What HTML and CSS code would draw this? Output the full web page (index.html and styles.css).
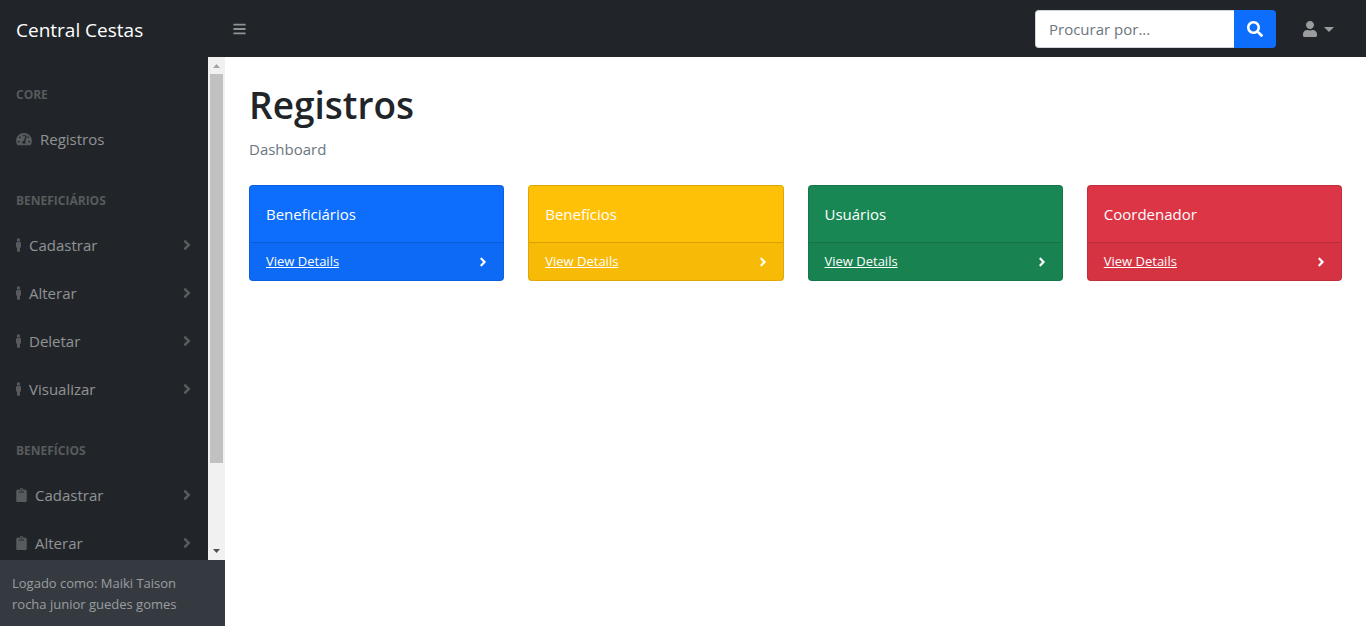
FILE: index.html
```
<!DOCTYPE html>
<html lang="pt-BR">
<head>
<meta charset="utf-8">
<meta name="viewport" content="width=device-width, initial-scale=1">
<title>Central Cestas</title>
<link rel="stylesheet" href="styles.css">
</head>
<body>
<svg class="sprite" aria-hidden="true">
  <symbol id="bars" viewBox="0 0 448 512"><path d="M16 132h416c8.837 0 16-7.163 16-16V76c0-8.837-7.163-16-16-16H16C7.163 60 0 67.163 0 76v40c0 8.837 7.163 16 16 16zm0 160h416c8.837 0 16-7.163 16-16v-40c0-8.837-7.163-16-16-16H16c-8.837 0-16 7.163-16 16v40c0 8.837 7.163 16 16 16zm0 160h416c8.837 0 16-7.163 16-16v-40c0-8.837-7.163-16-16-16H16c-8.837 0-16 7.163-16 16v40c0 8.837 7.163 16 16 16z"/></symbol>
  <symbol id="search" viewBox="0 0 512 512"><path d="M505 442.7L405.300 343c-4.500-4.500-10.600-7-17-7H372c27.600-35.300 44-79.700 44-128C416 93.100 322.900 0 208 0S0 93.100 0 208s93.100 208 208 208c48.300 0 92.700-16.400 128-44v16.300c0 6.400 2.500 12.500 7 17l99.700 99.700c9.400 9.400 24.600 9.400 33.900 0l28.300-28.300c9.400-9.400 9.400-24.600.1-34zM208 336c-70.700 0-128-57.200-128-128 0-70.700 57.200-128 128-128 70.700 0 128 57.200 128 128 0 70.700-57.200 128-128 128z"/></symbol>
  <symbol id="user" viewBox="0 0 448 512"><path d="M224 256c70.700 0 128-57.300 128-128S294.700 0 224 0 96 57.300 96 128s57.300 128 128 128zm89.600 32h-16.700c-22.200 10.200-46.900 16-72.900 16s-50.600-5.800-72.900-16h-16.700C60.200 288 0 348.200 0 422.400V464c0 26.500 21.500 48 48 48h352c26.500 0 48-21.500 48-48v-41.600c0-74.200-60.200-134.400-134.400-134.400z"/></symbol>
  <symbol id="male" viewBox="0 0 192 512"><path d="M96 0c35.346 0 64 28.654 64 64s-28.654 64-64 64-64-28.654-64-64S60.654 0 96 0m48 144h-11.360c-22.711 10.443-49.590 10.894-73.280 0H48c-26.510 0-48 21.490-48 48v136c0 13.255 10.745 24 24 24h16v136c0 13.255 10.745 24 24 24h64c13.255 0 24-10.745 24-24V352h16c13.255 0 24-10.745 24-24V192c0-26.510-21.490-48-48-48z"/></symbol>
  <symbol id="angle" viewBox="0 0 256 512"><path d="M224.300 273l-136 136c-9.400 9.400-24.600 9.400-33.900 0l-22.600-22.600c-9.400-9.400-9.400-24.600 0-33.900l96.400-96.400-96.400-96.400c-9.400-9.400-9.400-24.600 0-33.900L54.300 103c9.400-9.400 24.600-9.400 33.900 0l136 136c9.500 9.400 9.500 24.600.1 34z"/></symbol>
  <symbol id="clipboard" viewBox="0 0 384 512"><path d="M384 112v352c0 26.510-21.490 48-48 48H48c-26.510 0-48-21.490-48-48V112c0-26.510 21.490-48 48-48h80c0-35.290 28.710-64 64-64s64 28.710 64 64h80c26.510 0 48 21.490 48 48zM192 40c-13.255 0-24 10.745-24 24s10.745 24 24 24 24-10.745 24-24-10.745-24-24-24m96 114v-20a6 6 0 0 0-6-6H102a6 6 0 0 0-6 6v20a6 6 0 0 0 6 6h180a6 6 0 0 0 6-6z"/></symbol>
  <symbol id="gauge" viewBox="0 0 576 512"><path fill-rule="evenodd" d="M288 32C128.940 32 0 160.940 0 320c0 52.800 14.250 102.260 39.060 144.800 5.610 9.620 16.300 15.200 27.440 15.200h443c11.140 0 21.830-5.580 27.440-15.200C561.750 422.260 576 372.800 576 320c0-159.060-128.940-288-288-288zm0 64a32 32 0 1 1 0 64 32 32 0 0 1 0-64zM96 384a32 32 0 1 1 0-64 32 32 0 0 1 0 64zm48-160a32 32 0 1 1 0-64 32 32 0 0 1 0 64zm246.770-72.410l-61.330 184C343.130 347.330 352 364.540 352 384c0 11.720-3.380 22.550-8.880 32H232.880c-5.500-9.450-8.880-20.280-8.880-32 0-33.940 26.500-61.430 59.900-63.590l61.340-184.010c4.170-12.560 17.730-19.450 30.360-15.170 12.570 4.190 19.350 17.790 15.170 30.360zM432 160a32 32 0 1 1-23 54l16-49c2-3 4-5 7-5zM480 384a32 32 0 1 1 0-64 32 32 0 0 1 0 64z"/></symbol>
</svg>

<header class="topnav">
  <a class="brand" href="#">Central Cestas</a>
  <button class="menu-toggle" type="button" aria-label="Menu"><svg class="icon-bars"><use href="#bars"/></svg></button>
  <form class="search">
    <input class="search-input" type="text" placeholder="Procurar por..." aria-label="Procurar por...">
    <button class="search-button" type="button" aria-label="Procurar"><svg class="icon-search"><use href="#search"/></svg></button>
  </form>
  <button class="user-menu" type="button" aria-label="Usuário"><svg class="icon-user"><use href="#user"/></svg><span class="caret"></span></button>
</header>

<div class="layout">
  <aside class="sidebar">
    <div class="sidebar-scroll">
      <nav class="menu">
        <h2 class="menu-heading">CORE</h2>
        <a class="menu-link" href="#"><svg class="icon-gauge"><use href="#gauge"/></svg>Registros</a>
        <h2 class="menu-heading">BENEFICIÁRIOS</h2>
        <a class="menu-link" href="#"><svg class="icon-male"><use href="#male"/></svg>Cadastrar<svg class="icon-arrow"><use href="#angle"/></svg></a>
        <a class="menu-link" href="#"><svg class="icon-male"><use href="#male"/></svg>Alterar<svg class="icon-arrow"><use href="#angle"/></svg></a>
        <a class="menu-link" href="#"><svg class="icon-male"><use href="#male"/></svg>Deletar<svg class="icon-arrow"><use href="#angle"/></svg></a>
        <a class="menu-link" href="#"><svg class="icon-male"><use href="#male"/></svg>Visualizar<svg class="icon-arrow"><use href="#angle"/></svg></a>
        <h2 class="menu-heading">BENEFÍCIOS</h2>
        <a class="menu-link" href="#"><svg class="icon-clipboard"><use href="#clipboard"/></svg>Cadastrar<svg class="icon-arrow"><use href="#angle"/></svg></a>
        <a class="menu-link" href="#"><svg class="icon-clipboard"><use href="#clipboard"/></svg>Alterar<svg class="icon-arrow"><use href="#angle"/></svg></a>
      </nav>
      <div class="scrollbar" aria-hidden="true">
        <svg class="scroll-up" viewBox="0 0 17 17"><path d="M5 11h7L8.500 7z"/></svg>
        <div class="scroll-track"><div class="scroll-thumb"></div></div>
        <svg class="scroll-down" viewBox="0 0 17 17"><path d="M5 6h7l-3.500 4z"/></svg>
      </div>
    </div>
    <footer class="sidebar-footer">Logado como: Maiki Taison rocha junior guedes gomes</footer>
  </aside>

  <main class="content">
    <h1 class="title">Registros</h1>
    <p class="subtitle">Dashboard</p>
    <div class="cards">
      <section class="card card-blue">
        <div class="card-body">Beneficiários</div>
        <div class="card-footer"><a class="card-link" href="#">View Details</a><svg class="icon-card"><use href="#angle"/></svg></div>
      </section>
      <section class="card card-yellow">
        <div class="card-body">Benefícios</div>
        <div class="card-footer"><a class="card-link" href="#">View Details</a><svg class="icon-card"><use href="#angle"/></svg></div>
      </section>
      <section class="card card-green">
        <div class="card-body">Usuários</div>
        <div class="card-footer"><a class="card-link" href="#">View Details</a><svg class="icon-card"><use href="#angle"/></svg></div>
      </section>
      <section class="card card-red">
        <div class="card-body">Coordenador</div>
        <div class="card-footer"><a class="card-link" href="#">View Details</a><svg class="icon-card"><use href="#angle"/></svg></div>
      </section>
    </div>
  </main>
</div>
</body>
</html>
```
FILE: styles.css
```
* { box-sizing: border-box; }

body {
  margin: 0;
  height: 100vh;
  display: flex;
  flex-direction: column;
  overflow: hidden;
  font-family: "Segoe UI", "Open Sans", "Noto Sans", sans-serif;
  font-size: 15px;
  line-height: 24px;
  color: #212529;
  background: #fff;
}

svg { fill: currentColor; flex: none; }
button { border: 0; background: none; font: inherit; cursor: pointer; }
.sprite { display: none; }

/* Top bar */
.topnav {
  flex: none;
  display: flex;
  align-items: center;
  padding: 10px 16px 9px 0;
  background: #212529;
  color: rgba(255, 255, 255, .5);
}
.brand {
  width: 225px;
  padding: 2px 0 0 16px;
  color: #fff;
  font-size: 19px;
  line-height: 30px;
  text-decoration: none;
}
.menu-toggle { display: flex; padding: 8px; color: rgba(255, 255, 255, .5); }
.icon-bars { width: 13px; height: 14px; }
.search { display: flex; margin-left: auto; }
.search-input {
  width: 199px;
  height: 38px;
  padding: 6px 13px;
  border: 1px solid #ced4da;
  border-right: 0;
  border-radius: 4px 0 0 4px;
  font: inherit;
  color: #212529;
}
.search-input::placeholder { color: #6c757d; opacity: 1; }
.search-button {
  display: flex;
  align-items: center;
  padding: 0 13px;
  border-radius: 0 4px 4px 0;
  background: #0d6efd;
  color: #fff;
}
.icon-search { width: 16px; height: 16px; }
.user-menu {
  display: flex;
  align-items: center;
  gap: 6px;
  margin-left: 18px;
  padding: 8px 16px 8px 8px;
  color: rgba(255, 255, 255, .55);
}
.icon-user { width: 16px; height: 16px; }
.caret { border: 5px solid transparent; border-top-color: currentColor; border-bottom: 0; }

/* Sidebar */
.layout { flex: 1; display: flex; min-height: 0; }
.sidebar {
  width: 225px;
  flex: none;
  display: flex;
  flex-direction: column;
  background: #212529;
  color: rgba(255, 255, 255, .5);
}
.sidebar-scroll { flex: 1; display: flex; min-height: 0; overflow: hidden; }
.menu { flex: 1; }
.menu-heading {
  margin: 0;
  padding: 29px 16px 11px;
  font-size: 12px;
  line-height: 18px;
  font-weight: 700;
  color: rgba(255, 255, 255, .25);
}
.menu-link {
  display: flex;
  align-items: center;
  gap: 8px;
  padding: 12px 16px;
  color: rgba(255, 255, 255, .5);
  text-decoration: none;
}
.menu-link svg { color: rgba(255, 255, 255, .25); }
.icon-gauge { width: 16px; height: 14px; }
.icon-male { width: 5px; height: 14px; }
.icon-clipboard { width: 11px; height: 14px; }
.icon-arrow { width: 10px; height: 16px; margin-left: auto; }
.scrollbar {
  width: 17px;
  display: flex;
  flex-direction: column;
  background: #f1f1f1;
}
.scroll-up, .scroll-down { width: 17px; height: 17px; }
.scroll-up { color: #a3a3a3; }
.scroll-down { color: #505050; }
.scroll-track { flex: 1; padding: 0 2px; }
.scroll-thumb { height: 83%; background: #c1c1c1; }
.sidebar-footer {
  padding: 13px 12px 11px;
  font-size: 13px;
  line-height: 21px;
  background: #343a40;
}

/* Dashboard */
.content { flex: 1; min-width: 0; padding: 24px; }
.title { margin: 0 0 8px; font-size: 37px; line-height: 48px; font-weight: 600; }
.subtitle { margin: 0 0 24px; color: #6c757d; }
.cards { display: grid; grid-template-columns: repeat(4, 1fr); gap: 24px; }
.card { border: 1px solid rgba(0, 0, 0, .125); border-radius: 4px; color: #fff; }
.card-blue { background-color: #0d6efd; }
.card-yellow { background-color: #ffc107; }
.card-green { background-color: #198754; }
.card-red { background-color: #dc3545; }
.card-body { padding: 16px; }
.card-footer {
  display: flex;
  align-items: center;
  justify-content: space-between;
  padding: 8px 16px;
  border-top: 1px solid rgba(0, 0, 0, .125);
  background: rgba(0, 0, 0, .03);
  font-size: 13px;
  line-height: 21px;
}
.card-link { color: #fff; }
.icon-card { width: 8px; height: 14px; }
```
